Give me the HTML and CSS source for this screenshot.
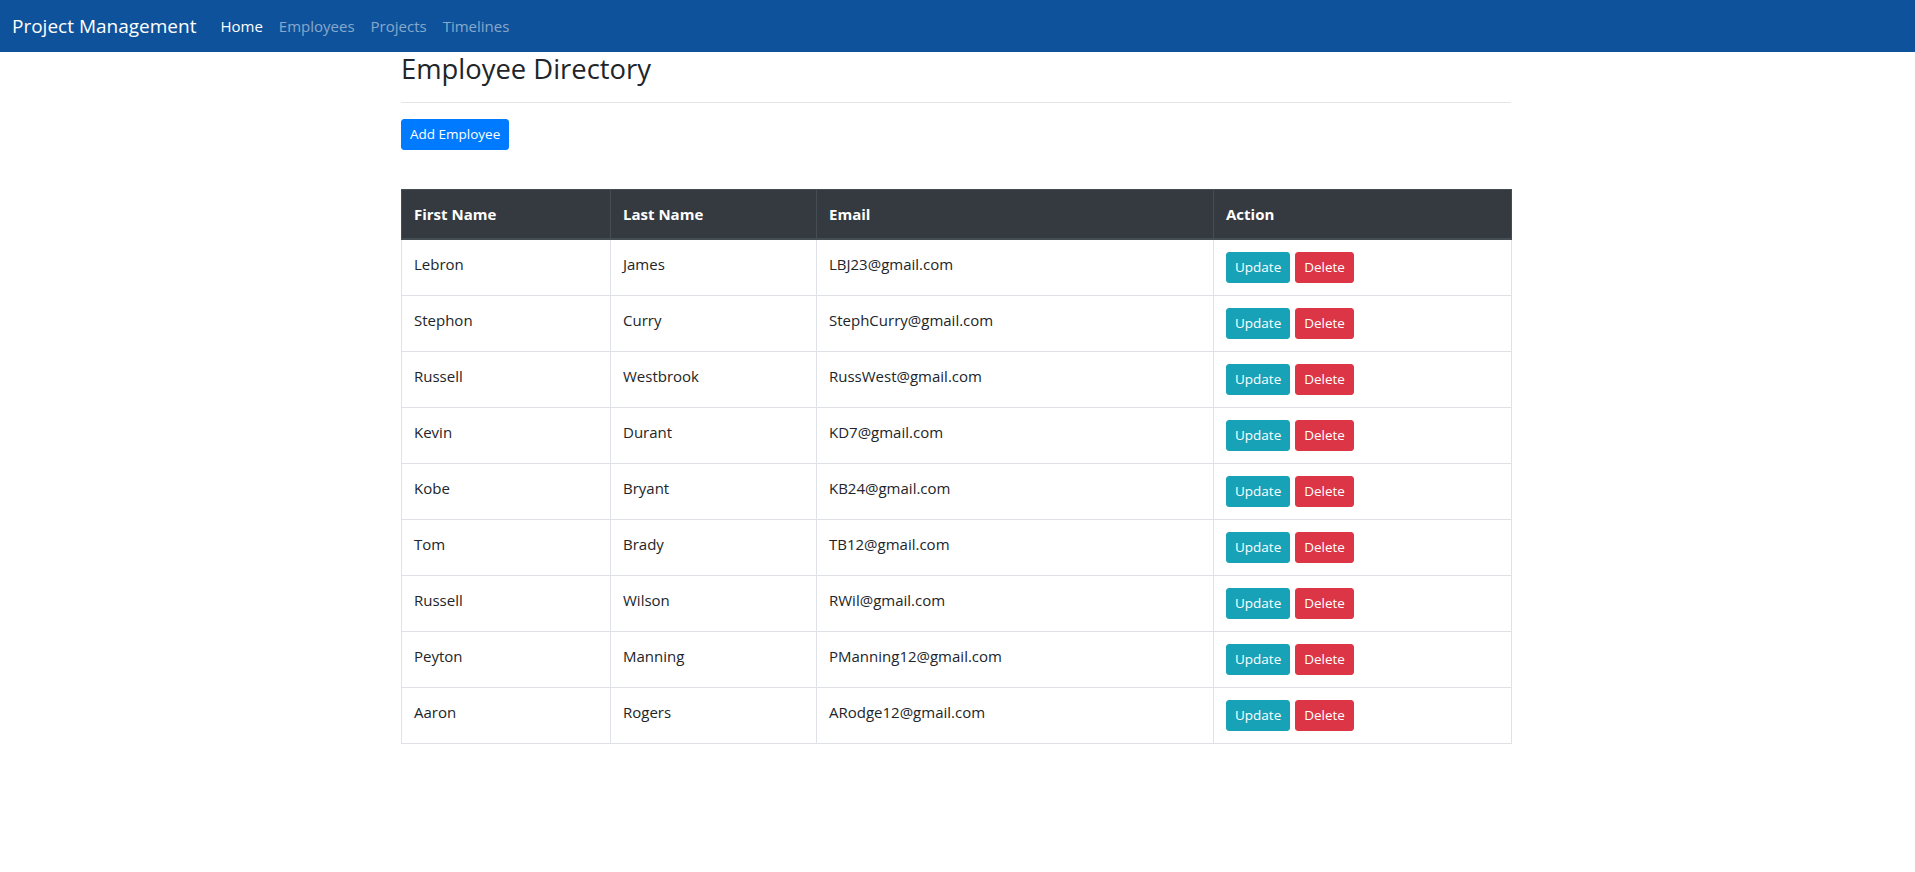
FILE: index.html
```html
<!DOCTYPE html>
<html lang="en">
<head>
<meta charset="utf-8">
<title>Project Management</title>
<link rel="stylesheet" href="styles.css">
</head>
<body>
<nav class="navbar">
  <a class="brand" href="#">Project Management</a>
  <ul class="nav">
    <li><a class="nav-link active" href="#">Home</a></li>
    <li><a class="nav-link" href="#">Employees</a></li>
    <li><a class="nav-link" href="#">Projects</a></li>
    <li><a class="nav-link" href="#">Timelines</a></li>
  </ul>
</nav>
<main class="container">
  <h3 class="page-title">Employee Directory</h3>
  <hr class="divider">
  <div class="toolbar">
    <button class="btn btn-sm btn-primary">Add Employee</button>
  </div>
  <table class="table">
    <thead>
      <tr>
        <th class="col-first">First Name</th>
        <th class="col-last">Last Name</th>
        <th class="col-email">Email</th>
        <th class="col-action">Action</th>
      </tr>
    </thead>
    <tbody>
      <tr><td>Lebron</td><td>James</td><td>LBJ23@gmail.com</td><td><button class="btn btn-sm btn-info">Update</button> <button class="btn btn-sm btn-danger">Delete</button></td></tr>
      <tr><td>Stephon</td><td>Curry</td><td>StephCurry@gmail.com</td><td><button class="btn btn-sm btn-info">Update</button> <button class="btn btn-sm btn-danger">Delete</button></td></tr>
      <tr><td>Russell</td><td>Westbrook</td><td>RussWest@gmail.com</td><td><button class="btn btn-sm btn-info">Update</button> <button class="btn btn-sm btn-danger">Delete</button></td></tr>
      <tr><td>Kevin</td><td>Durant</td><td>KD7@gmail.com</td><td><button class="btn btn-sm btn-info">Update</button> <button class="btn btn-sm btn-danger">Delete</button></td></tr>
      <tr><td>Kobe</td><td>Bryant</td><td>KB24@gmail.com</td><td><button class="btn btn-sm btn-info">Update</button> <button class="btn btn-sm btn-danger">Delete</button></td></tr>
      <tr><td>Tom</td><td>Brady</td><td>TB12@gmail.com</td><td><button class="btn btn-sm btn-info">Update</button> <button class="btn btn-sm btn-danger">Delete</button></td></tr>
      <tr><td>Russell</td><td>Wilson</td><td>RWil@gmail.com</td><td><button class="btn btn-sm btn-info">Update</button> <button class="btn btn-sm btn-danger">Delete</button></td></tr>
      <tr><td>Peyton</td><td>Manning</td><td>PManning12@gmail.com</td><td><button class="btn btn-sm btn-info">Update</button> <button class="btn btn-sm btn-danger">Delete</button></td></tr>
      <tr><td>Aaron</td><td>Rogers</td><td>ARodge12@gmail.com</td><td><button class="btn btn-sm btn-info">Update</button> <button class="btn btn-sm btn-danger">Delete</button></td></tr>
    </tbody>
  </table>
</main>
</body>
</html>
```

FILE: styles.css
```css
*, *::before, *::after { box-sizing: border-box; }

body {
  margin: 0;
  font-family: "Open Sans", "Noto Sans", "Liberation Sans", sans-serif;
  font-size: 15px;
  line-height: 24px;
  color: #212529;
  background: #fff;
}

.navbar {
  display: flex;
  align-items: center;
  height: 52px;
  padding: 0 12px;
  background: #0e529b;
}

.brand {
  font-size: 19px;
  line-height: 30px;
  color: #fff;
  text-decoration: none;
  margin-right: 16px;
}

.nav {
  display: flex;
  list-style: none;
  margin: 0;
  padding: 0;
}

.nav-link {
  display: block;
  padding: 8px 8px;
  font-size: 15px;
  color: rgba(255, 255, 255, 0.5);
  text-decoration: none;
}

.nav-link.active { color: #fff; }

.container {
  width: 1113px;
  margin: 0 auto;
  padding-right: 3px;
}

.page-title {
  margin: 0 0 8px;
  font-size: 27.4px;
  font-weight: 500;
  line-height: 34px;
}

.divider {
  margin: 16px 0;
  border: 0;
  border-top: 1px solid rgba(0, 0, 0, 0.1);
}

.toolbar {
  margin-bottom: 39px;
  line-height: 0;
}

.btn {
  display: inline-block;
  font-family: inherit;
  border: 1px solid transparent;
  color: #fff;
  cursor: pointer;
  vertical-align: middle;
}

.btn-sm {
  padding: 3px 8px;
  font-size: 13.5px;
  line-height: 23px;
  border-radius: 3px;
}

.btn-info + .btn-danger { margin-left: 1px; }

.btn-primary { background: #007bff; border-color: #007bff; }
.btn-info { background: #17a2b8; border-color: #17a2b8; }
.btn-danger { background: #dc3545; border-color: #dc3545; }

.table {
  width: 1110px;
  border-collapse: collapse;
  table-layout: fixed;
}

.table th,
.table td {
  padding: 12px;
  border: 1px solid #dee2e6;
  text-align: left;
  vertical-align: top;
}

.table td { height: 56px; }

.table thead th {
  background: #343a40;
  color: #fff;
  font-weight: 700;
  border-color: #454d55;
  border-bottom-width: 2px;
  vertical-align: bottom;
}

.col-first { width: 209px; }
.col-last { width: 206px; }
.col-email { width: 397px; }
.col-action { width: 298px; }
```
